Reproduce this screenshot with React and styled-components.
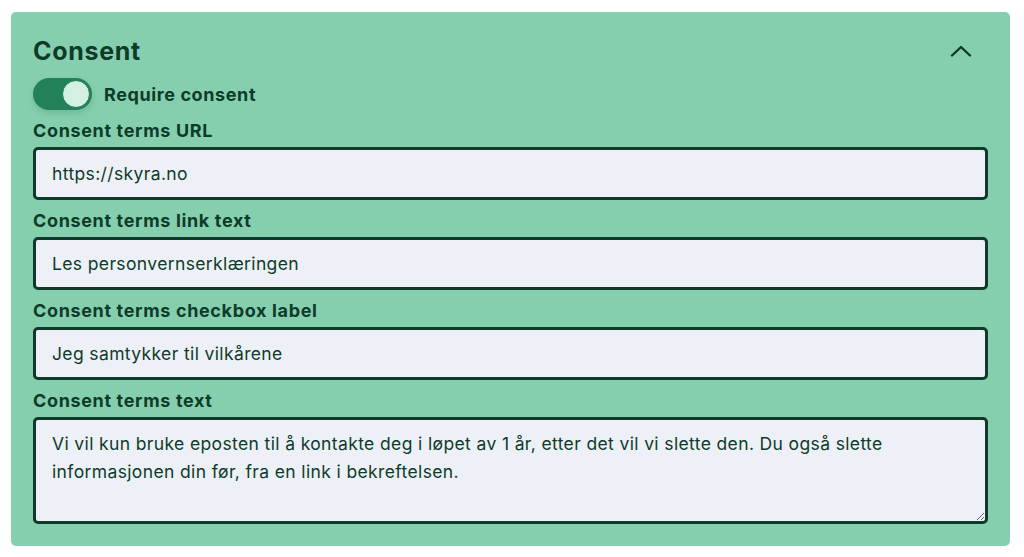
import React, { useState } from "react";
import styled, { createGlobalStyle } from "styled-components";

const Global = createGlobalStyle`
  html, body { margin: 0; padding: 0; background: #ffffff; }
  body { font-family: Inter, "Noto Sans", sans-serif; color: #0d3b29; }
  * { box-sizing: border-box; }
`;

const Page = styled.div`
  padding: 12px 14px 12px 11px;
`;

const Panel = styled.section`
  background: #85cfaf;
  border-radius: 5px;
  padding: 22px 22px 22px 22px;
  display: flex;
  flex-direction: column;
`;

const Header = styled.div`
  display: flex;
  align-items: center;
  justify-content: space-between;
  height: 34px;
`;

const Title = styled.h2`
  margin: 0;
  font-size: 25px;
  font-weight: 700;
  letter-spacing: 0.7px;
  line-height: 34px;
  color: #0d3b29;
`;

const Collapse = styled.button`
  border: 0;
  background: transparent;
  padding: 0;
  width: 40px;
  height: 34px;
  display: flex;
  align-items: center;
  justify-content: center;
  margin-right: 7px;
  color: #0d3b29;
  cursor: pointer;
`;

const ToggleRow = styled.label`
  display: flex;
  align-items: center;
  gap: 12px;
  margin-top: 10px;
  font-size: 18px;
  font-weight: 700;
  letter-spacing: 0.6px;
  cursor: pointer;
`;

const Track = styled.span`
  position: relative;
  width: 59px;
  height: 32px;
  border-radius: 16px;
  background: ${(p) => (p.$on ? "#23815a" : "#9bb8aa")};
  box-shadow: 0 3px 6px rgba(20, 80, 50, 0.18);
  flex-shrink: 0;
`;

const Knob = styled.span`
  position: absolute;
  top: 2px;
  left: ${(p) => (p.$on ? "29px" : "2px")};
  width: 28px;
  height: 28px;
  border-radius: 50%;
  background: #d3f0e3;
  border: 1px solid #1e7a53;
`;

const Fields = styled.div`
  display: flex;
  flex-direction: column;
  gap: 9px;
  margin-top: 9px;
`;

const Field = styled.div`
  display: flex;
  flex-direction: column;
  gap: 4px;
`;

const Label = styled.label`
  font-size: 18px;
  font-weight: 700;
  line-height: 24px;
  letter-spacing: 0.65px;
  color: #0d3b29;
`;

const inputBase = `
  width: 100%;
  border: 3px solid #0f3a2a;
  border-radius: 5px;
  background: #eef0f7;
  color: #0d3b29;
  font-family: Inter, "Noto Sans", sans-serif;
  font-size: 17.5px;
  letter-spacing: 0.37px;
  padding: 0 16px;
  outline: none;
  margin: 0;
`;

const Input = styled.input`
  ${inputBase}
  height: 53px;
`;

const TextArea = styled.textarea`
  ${inputBase}
  height: 107px;
  padding: 10px 16px;
  line-height: 28px;
  resize: vertical;
  display: block;
`;

export default function App() {
  const [on, setOn] = useState(true);
  return (
    <Page>
      <Global />
      <Panel>
        <Header>
          <Title>Consent</Title>
          <Collapse aria-label="Collapse">
            <svg width="22" height="12" viewBox="0 0 22 12" fill="none">
              <path d="M2 10.5 L11 2 L20 10.5" stroke="currentColor" strokeWidth="2.4" strokeLinecap="round" strokeLinejoin="round" />
            </svg>
          </Collapse>
        </Header>
        <ToggleRow onClick={() => setOn(!on)}>
          <Track $on={on}>
            <Knob $on={on} />
          </Track>
          Require consent
        </ToggleRow>
        <Fields>
          <Field>
            <Label>Consent terms URL</Label>
            <Input defaultValue="https://skyra.no" />
          </Field>
          <Field>
            <Label>Consent terms link text</Label>
            <Input defaultValue="Les personvernserklæringen" />
          </Field>
          <Field>
            <Label>Consent terms checkbox label</Label>
            <Input defaultValue="Jeg samtykker til vilkårene" />
          </Field>
          <Field>
            <Label>Consent terms text</Label>
            <TextArea defaultValue="Vi vil kun bruke eposten til å kontakte deg i løpet av 1 år, etter det vil vi slette den. Du også slette informasjonen din før, fra en link i bekreftelsen." />
          </Field>
        </Fields>
      </Panel>
    </Page>
  );
}
